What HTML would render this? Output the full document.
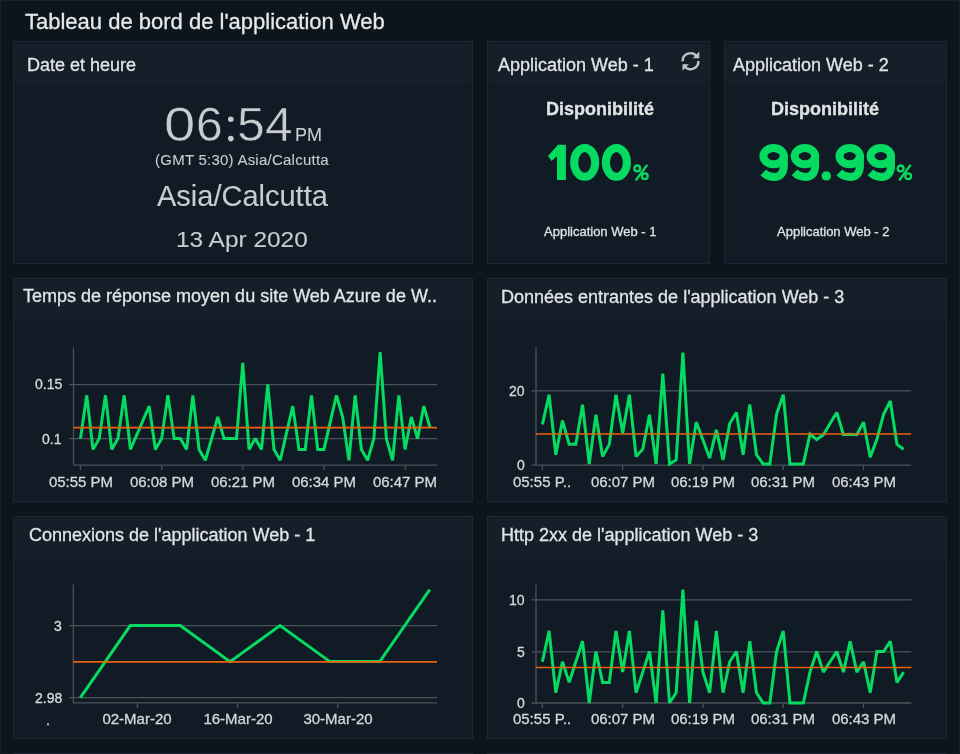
<!DOCTYPE html>
<html><head><meta charset="utf-8"><title>Tableau de bord</title>
<style>
html,body{margin:0;padding:0;}
body{width:960px;height:754px;overflow:hidden;background:#0b151b;position:relative;font-family:"Liberation Sans",sans-serif;}
.t{position:absolute;white-space:nowrap;will-change:transform;-webkit-text-stroke:0.3px currentColor;}
.card{position:absolute;background:#111b25;border:1px solid #1b2834;}
.head{background:#141f29;margin:1px 1px 0 1px;}
</style></head><body>
<div style="position:absolute;left:0;top:0;width:960px;height:1px;background:#18222b"></div>
<div style="position:absolute;left:0;top:0;width:1px;height:754px;background:#18222b"></div>
<div style="position:absolute;left:959px;top:0;width:1px;height:754px;background:#18222b"></div>
<div style="position:absolute;left:0;top:753px;width:960px;height:1px;background:#121c24"></div>
<div class="t" style="left:24.5px;top:10.88px;font-size:22px;line-height:22px;color:#e6e8ea;font-weight:normal;letter-spacing:0px;">Tableau de bord de l'application Web</div>
<div class="card" style="left:13px;top:41px;width:458px;height:221px"><div class="head" style="height:41px"></div></div>
<div class="card" style="left:487px;top:41px;width:221px;height:221px"><div class="head" style="height:41px"></div></div>
<div class="card" style="left:724px;top:41px;width:221px;height:221px"><div class="head" style="height:41px"></div></div>
<div class="card" style="left:13px;top:278px;width:458px;height:222px"><div class="head" style="height:41px"></div></div>
<div class="card" style="left:487px;top:278px;width:458px;height:222px"><div class="head" style="height:41px"></div></div>
<div class="card" style="left:13px;top:516px;width:458px;height:221px"><div class="head" style="height:42px"></div></div>
<div class="card" style="left:487px;top:516px;width:458px;height:221px"><div class="head" style="height:42px"></div></div>
<div style="position:absolute;left:13px;top:753px;width:460px;height:1px;background:#1c2731"></div>
<div style="position:absolute;left:487px;top:753px;width:460px;height:1px;background:#1c2731"></div>
<div class="t" style="left:26.7px;top:55.76px;font-size:18px;line-height:18px;color:#e2e4e6;font-weight:normal;letter-spacing:0px;">Date et heure</div>
<div class="t" style="left:498.4px;top:55.76px;font-size:18px;line-height:18px;color:#e2e4e6;font-weight:normal;letter-spacing:0px;">Application Web - 1</div>
<div class="t" style="left:733.4px;top:55.76px;font-size:18px;line-height:18px;color:#e2e4e6;font-weight:normal;letter-spacing:0px;">Application Web - 2</div>
<div class="t" style="left:22.6px;top:287.46px;font-size:18px;line-height:18px;color:#e2e4e6;font-weight:normal;letter-spacing:0px;">Temps de réponse moyen du site Web Azure de W..</div>
<div class="t" style="left:500.5px;top:287.66px;font-size:18px;line-height:18px;color:#e2e4e6;font-weight:normal;letter-spacing:0px;">Données entrantes de l'application Web - 3</div>
<div class="t" style="left:28.5px;top:526.26px;font-size:18px;line-height:18px;color:#e2e4e6;font-weight:normal;letter-spacing:0px;">Connexions de l'application Web - 1</div>
<div class="t" style="left:500.8px;top:526.26px;font-size:18px;line-height:18px;color:#e2e4e6;font-weight:normal;letter-spacing:0px;">Http 2xx de l'application Web - 3</div>
<svg style="position:absolute;left:0;top:0" width="960" height="754"><g fill="none" stroke="#bfc3c7" stroke-width="2.4"><path d="M682.6,61.4 A7.9,7.9 0 0 1 696.6,56.1"/><path d="M698.4,61 A7.9,7.9 0 0 1 684.4,66.3"/></g><path d="M699.3,51.6 L699.3,58.3 L692.6,58.3 Z" fill="#bfc3c7"/><path d="M682.5,70.7 L682.5,64.3 L688.9,64.3 Z" fill="#bfc3c7"/></svg>
<div class="t" style="left:164.4px;top:100.87px;font-size:48px;line-height:48px;color:#c8ccd0;transform:scaleX(1.17);transform-origin:0 0;-webkit-text-stroke:0.55px #111b25">0</div>
<div class="t" style="left:196px;top:100.87px;font-size:48px;line-height:48px;color:#c8ccd0;transform:scaleX(1.0);transform-origin:0 0;-webkit-text-stroke:0.55px #111b25">6</div>
<svg style="position:absolute;left:0;top:0" width="960" height="754"><circle cx="230.8" cy="119.2" r="2.8" fill="#c8ccd0"/><circle cx="230.8" cy="138.6" r="2.8" fill="#c8ccd0"/></svg>
<div class="t" style="left:236.7px;top:100.87px;font-size:48px;line-height:48px;color:#c8ccd0;transform:scaleX(1.04);transform-origin:0 0;-webkit-text-stroke:0.55px #111b25">5</div>
<div class="t" style="left:265.2px;top:100.87px;font-size:48px;line-height:48px;color:#c8ccd0;transform:scaleX(1.03);transform-origin:0 0;-webkit-text-stroke:0.55px #111b25">4</div>
<div class="t" style="left:294.5px;top:126.26px;font-size:18px;line-height:18px;color:#c8ccd0;font-weight:normal;letter-spacing:0px;-webkit-text-stroke:0.1px currentColor;">PM</div>
<div class="t" style="left:155px;top:152.1px;font-size:15px;line-height:15px;color:#c8ccd0;font-weight:normal;letter-spacing:0.24px;-webkit-text-stroke:0.1px currentColor;">(GMT 5:30) Asia/Calcutta</div>
<div class="t" style="left:156.9px;top:182.15px;font-size:29px;line-height:29px;color:#c8ccd0;font-weight:normal;letter-spacing:0px;-webkit-text-stroke:0.1px currentColor;">Asia/Calcutta</div>
<div class="t" style="left:176.3px;top:229.28px;font-size:22px;line-height:22px;color:#c8ccd0;font-weight:normal;letter-spacing:0px;-webkit-text-stroke:0.1px currentColor;transform:scaleX(1.11);transform-origin:0 0;">13 Apr 2020</div>
<div class="t" style="left:546px;top:99.51px;font-size:18px;line-height:18px;color:#e0e2e4;font-weight:bold;letter-spacing:0px;">Disponibilité</div>
<div class="t" style="left:770.9px;top:99.51px;font-size:18px;line-height:18px;color:#e0e2e4;font-weight:bold;letter-spacing:0px;">Disponibilité</div>
<svg style="position:absolute;left:0;top:0" width="960" height="754" viewBox="0 0 960 754"><path d="M558,144.8 L565.9,144.8 L565.9,180.1 L557,180.1 L557,156.3 L551.6,160.9 L548,155.9 Z" fill="#05db61"/><ellipse cx="584.7" cy="162.4" rx="10.5" ry="14.35" fill="none" stroke="#05db61" stroke-width="8.1"/><ellipse cx="616.4" cy="162.4" rx="10.5" ry="14.35" fill="none" stroke="#05db61" stroke-width="8.1"/><ellipse cx="773.6" cy="156.1" rx="10.2" ry="8.1" fill="none" stroke="#05db61" stroke-width="8"/><path d="M783.8,155 L783.8,166 C783.8,173.5 779.5,176.9 774.5,176.9 C769.5,176.9 766.2,175.4 763.3,172.4" fill="none" stroke="#05db61" stroke-width="8"/><ellipse cx="804.9" cy="156.1" rx="10.2" ry="8.1" fill="none" stroke="#05db61" stroke-width="8"/><path d="M815.1,155 L815.1,166 C815.1,173.5 810.8,176.9 805.8,176.9 C800.8,176.9 797.5,175.4 794.6,172.4" fill="none" stroke="#05db61" stroke-width="8"/><ellipse cx="849.7" cy="156.1" rx="10.2" ry="8.1" fill="none" stroke="#05db61" stroke-width="8"/><path d="M859.9,155 L859.9,166 C859.9,173.5 855.6,176.9 850.6,176.9 C845.6,176.9 842.3,175.4 839.4,172.4" fill="none" stroke="#05db61" stroke-width="8"/><ellipse cx="880.8" cy="156.1" rx="10.2" ry="8.1" fill="none" stroke="#05db61" stroke-width="8"/><path d="M891,155 L891,166 C891,173.5 886.7,176.9 881.7,176.9 C876.7,176.9 873.4,175.4 870.5,172.4" fill="none" stroke="#05db61" stroke-width="8"/><circle cx="826.3" cy="175.9" r="4.7" fill="#05db61"/><g transform="translate(632.6,164.1)"><g fill="none" stroke="#05db61" stroke-width="2.3"><circle cx="4.6" cy="4.3" r="2.9"/><circle cx="12.2" cy="12.1" r="2.9"/></g><path d="M3.2 16.3 L14.6 0.8" stroke="#05db61" stroke-width="2.4"/></g><g transform="translate(896,164.1)"><g fill="none" stroke="#05db61" stroke-width="2.3"><circle cx="4.6" cy="4.3" r="2.9"/><circle cx="12.2" cy="12.1" r="2.9"/></g><path d="M3.2 16.3 L14.6 0.8" stroke="#05db61" stroke-width="2.4"/></g></svg>
<div class="t" style="left:544.4px;top:224.6px;font-size:13px;line-height:13px;color:#e0e2e4;font-weight:normal;letter-spacing:0px;">Application Web - 1</div>
<div class="t" style="left:776.5px;top:224.6px;font-size:13px;line-height:13px;color:#e0e2e4;font-weight:normal;letter-spacing:0px;">Application Web - 2</div>
<div class="t" style="right:898.2px;top:377.45px;font-size:14px;line-height:14px;color:#d6d8da;text-align:right">0.15</div>
<div class="t" style="right:898.2px;top:431.55px;font-size:14px;line-height:14px;color:#d6d8da;text-align:right">0.1</div>
<div class="t" style="left:-19.5px;width:200px;top:474.2px;font-size:15px;line-height:15px;color:#d6d8da;text-align:center">05:55 PM</div>
<div class="t" style="left:61.7px;width:200px;top:474.2px;font-size:15px;line-height:15px;color:#d6d8da;text-align:center">06:08 PM</div>
<div class="t" style="left:142.9px;width:200px;top:474.2px;font-size:15px;line-height:15px;color:#d6d8da;text-align:center">06:21 PM</div>
<div class="t" style="left:224.1px;width:200px;top:474.2px;font-size:15px;line-height:15px;color:#d6d8da;text-align:center">06:34 PM</div>
<div class="t" style="left:305.3px;width:200px;top:474.2px;font-size:15px;line-height:15px;color:#d6d8da;text-align:center">06:47 PM</div>
<div class="t" style="right:435.5px;top:384.15px;font-size:14px;line-height:14px;color:#d6d8da;text-align:right">20</div>
<div class="t" style="right:435.5px;top:458.15px;font-size:14px;line-height:14px;color:#d6d8da;text-align:right">0</div>
<div class="t" style="left:442.4px;width:200px;top:474.2px;font-size:15px;line-height:15px;color:#d6d8da;text-align:center">05:55 P..</div>
<div class="t" style="left:522.68px;width:200px;top:474.2px;font-size:15px;line-height:15px;color:#d6d8da;text-align:center">06:07 PM</div>
<div class="t" style="left:602.96px;width:200px;top:474.2px;font-size:15px;line-height:15px;color:#d6d8da;text-align:center">06:19 PM</div>
<div class="t" style="left:683.24px;width:200px;top:474.2px;font-size:15px;line-height:15px;color:#d6d8da;text-align:center">06:31 PM</div>
<div class="t" style="left:763.52px;width:200px;top:474.2px;font-size:15px;line-height:15px;color:#d6d8da;text-align:center">06:43 PM</div>
<div class="t" style="right:898px;top:618.65px;font-size:14px;line-height:14px;color:#d6d8da;text-align:right">3</div>
<div class="t" style="right:898px;top:690.85px;font-size:14px;line-height:14px;color:#d6d8da;text-align:right">2.98</div>
<div class="t" style="left:46.3px;top:712.65px;font-size:14px;line-height:14px;color:#d6d8da;font-weight:normal;letter-spacing:0px;">.</div>
<div class="t" style="left:37.4px;width:200px;top:710.9px;font-size:15px;line-height:15px;color:#d6d8da;text-align:center">02-Mar-20</div>
<div class="t" style="left:137.55px;width:200px;top:710.9px;font-size:15px;line-height:15px;color:#d6d8da;text-align:center">16-Mar-20</div>
<div class="t" style="left:237.7px;width:200px;top:710.9px;font-size:15px;line-height:15px;color:#d6d8da;text-align:center">30-Mar-20</div>
<div class="t" style="right:435.5px;top:593.35px;font-size:14px;line-height:14px;color:#d6d8da;text-align:right">10</div>
<div class="t" style="right:435.5px;top:645.05px;font-size:14px;line-height:14px;color:#d6d8da;text-align:right">5</div>
<div class="t" style="right:435.5px;top:696.15px;font-size:14px;line-height:14px;color:#d6d8da;text-align:right">0</div>
<div class="t" style="left:442.4px;width:200px;top:710.9px;font-size:15px;line-height:15px;color:#d6d8da;text-align:center">05:55 P..</div>
<div class="t" style="left:522.68px;width:200px;top:710.9px;font-size:15px;line-height:15px;color:#d6d8da;text-align:center">06:07 PM</div>
<div class="t" style="left:602.96px;width:200px;top:710.9px;font-size:15px;line-height:15px;color:#d6d8da;text-align:center">06:19 PM</div>
<div class="t" style="left:683.24px;width:200px;top:710.9px;font-size:15px;line-height:15px;color:#d6d8da;text-align:center">06:31 PM</div>
<div class="t" style="left:763.52px;width:200px;top:710.9px;font-size:15px;line-height:15px;color:#d6d8da;text-align:center">06:43 PM</div>
<svg style="position:absolute;left:0;top:0" width="960" height="754" viewBox="0 0 960 754"><line x1="73.5" y1="347.4" x2="73.5" y2="465.2" stroke="#4b535a" stroke-width="1.3"/><line x1="73.5" y1="465.2" x2="437" y2="465.2" stroke="#4b535a" stroke-width="1.3"/><line x1="69.2" y1="384.6" x2="437" y2="384.6" stroke="#4b535a" stroke-width="1.3"/><line x1="69.2" y1="438.6" x2="437" y2="438.6" stroke="#4b535a" stroke-width="1.3"/><line x1="80.5" y1="465.2" x2="80.5" y2="470" stroke="#4b535a" stroke-width="1.3"/><line x1="161.7" y1="465.2" x2="161.7" y2="470" stroke="#4b535a" stroke-width="1.3"/><line x1="242.9" y1="465.2" x2="242.9" y2="470" stroke="#4b535a" stroke-width="1.3"/><line x1="324.1" y1="465.2" x2="324.1" y2="470" stroke="#4b535a" stroke-width="1.3"/><line x1="405.3" y1="465.2" x2="405.3" y2="470" stroke="#4b535a" stroke-width="1.3"/><polyline points="80.5,438.6 86.74,395.32 92.98,449.42 99.23,438.6 105.47,395.32 111.71,449.42 117.95,438.6 124.19,395.32 130.44,449.42 136.68,435.03 142.92,420.53 149.16,406.14 155.4,449.42 161.65,438.6 167.89,395.32 174.13,438.6 180.37,438.6 186.61,449.42 192.86,395.32 199.1,449.42 205.34,460.24 211.58,438.6 217.82,416.96 224.07,438.6 230.31,438.6 236.55,438.6 242.79,362.86 249.03,449.42 255.28,438.6 261.52,449.42 267.76,384.5 274,449.42 280.24,460.24 286.49,433.19 292.73,406.14 298.97,449.42 305.21,449.42 311.45,395.32 317.7,449.42 323.94,449.42 330.18,422.37 336.42,395.32 342.66,416.96 348.91,460.24 355.15,395.32 361.39,449.42 367.63,460.24 373.87,438.6 380.12,352.04 386.36,438.6 392.6,460.24 398.84,395.32 405.08,449.42 411.33,416.96 417.57,438.6 423.81,406.14 430.05,427.78" fill="none" stroke="#05db61" stroke-width="3" stroke-linejoin="miter" stroke-miterlimit="2"/><line x1="73.5" y1="427.6" x2="437" y2="427.6" stroke="#eb620e" stroke-width="1.7"/><line x1="536" y1="347" x2="536" y2="465.1" stroke="#4b535a" stroke-width="1.3"/><line x1="531.5" y1="465.1" x2="911.2" y2="465.1" stroke="#4b535a" stroke-width="1.3"/><line x1="531.5" y1="390.9" x2="911.2" y2="390.9" stroke="#4b535a" stroke-width="1.3"/><line x1="542.4" y1="465.1" x2="542.4" y2="470" stroke="#4b535a" stroke-width="1.3"/><line x1="622.68" y1="465.1" x2="622.68" y2="470" stroke="#4b535a" stroke-width="1.3"/><line x1="702.96" y1="465.1" x2="702.96" y2="470" stroke="#4b535a" stroke-width="1.3"/><line x1="783.24" y1="465.1" x2="783.24" y2="470" stroke="#4b535a" stroke-width="1.3"/><line x1="863.52" y1="465.1" x2="863.52" y2="470" stroke="#4b535a" stroke-width="1.3"/><polyline points="542.4,424.35 549.09,394.71 555.78,454.73 562.47,420.64 569.16,444.35 575.85,444.35 582.54,404.71 589.23,463.99 595.92,414.71 602.61,456.58 609.3,444.35 615.99,394.71 622.68,432.87 629.37,394.71 636.06,456.58 642.75,449.17 649.44,414.71 656.13,463.99 662.82,373.59 669.51,463.99 676.2,459.91 682.89,352.47 689.58,463.99 696.27,422.12 702.96,440.09 709.65,458.06 716.34,429.9 723.03,459.91 729.72,423.6 736.41,412.49 743.1,454.73 749.79,404.34 756.48,454.73 763.17,463.99 769.86,463.99 776.55,414.34 783.24,394.71 789.93,463.99 796.62,463.99 803.31,463.99 810,433.98 816.69,439.54 823.38,434.72 830.07,423.6 836.76,412.49 843.45,434.72 850.14,434.35 856.83,434.72 863.52,422.12 870.21,457.32 876.9,439.17 883.59,414.34 890.28,401 896.97,444.35 903.66,449.17" fill="none" stroke="#05db61" stroke-width="3" stroke-linejoin="miter" stroke-miterlimit="2"/><line x1="536" y1="434" x2="911.2" y2="434" stroke="#eb620e" stroke-width="1.7"/><line x1="73.3" y1="584.4" x2="73.3" y2="702.9" stroke="#4b535a" stroke-width="1.3"/><line x1="73.3" y1="702.9" x2="437" y2="702.9" stroke="#4b535a" stroke-width="1.3"/><line x1="69.2" y1="625.6" x2="437" y2="625.6" stroke="#4b535a" stroke-width="1.3"/><line x1="69.2" y1="697.6" x2="437" y2="697.6" stroke="#4b535a" stroke-width="1.3"/><line x1="137.4" y1="702.9" x2="137.4" y2="708" stroke="#4b535a" stroke-width="1.3"/><line x1="237.55" y1="702.9" x2="237.55" y2="708" stroke="#4b535a" stroke-width="1.3"/><line x1="337.7" y1="702.9" x2="337.7" y2="708" stroke="#4b535a" stroke-width="1.3"/><polyline points="80.4,697.6 130.3,625.6 180.2,625.6 230.1,661.6 280,625.6 329.9,661.6 379.8,661.6 429.7,589.6" fill="none" stroke="#05db61" stroke-width="3" stroke-linejoin="miter" stroke-miterlimit="2"/><line x1="73.3" y1="661.8" x2="437" y2="661.8" stroke="#eb620e" stroke-width="1.7"/><line x1="536" y1="584.7" x2="536" y2="703" stroke="#4b535a" stroke-width="1.3"/><line x1="531.5" y1="703" x2="911.4" y2="703" stroke="#4b535a" stroke-width="1.3"/><line x1="531.5" y1="599.9" x2="911.4" y2="599.9" stroke="#4b535a" stroke-width="1.3"/><line x1="531.5" y1="651.8" x2="911.4" y2="651.8" stroke="#4b535a" stroke-width="1.3"/><line x1="542.4" y1="703" x2="542.4" y2="708" stroke="#4b535a" stroke-width="1.3"/><line x1="622.68" y1="703" x2="622.68" y2="708" stroke="#4b535a" stroke-width="1.3"/><line x1="702.96" y1="703" x2="702.96" y2="708" stroke="#4b535a" stroke-width="1.3"/><line x1="783.24" y1="703" x2="783.24" y2="708" stroke="#4b535a" stroke-width="1.3"/><line x1="863.52" y1="703" x2="863.52" y2="708" stroke="#4b535a" stroke-width="1.3"/><polyline points="542.4,661.8 549.09,630.9 555.78,692.7 562.47,661.8 569.16,682.4 575.85,661.8 582.54,641.2 589.23,703 595.92,651.5 602.61,682.4 609.3,682.4 615.99,630.9 622.68,672.1 629.37,630.9 636.06,692.7 642.75,672.1 649.44,651.5 656.13,703 662.82,610.3 669.51,703 676.2,692.7 682.89,589.7 689.58,703 696.27,620.6 702.96,672.1 709.65,692.7 716.34,630.9 723.03,692.7 729.72,661.8 736.41,651.5 743.1,692.7 749.79,641.2 756.48,692.7 763.17,703 769.86,703 776.55,651.5 783.24,630.9 789.93,703 796.62,703 803.31,703 810,672.1 816.69,651.5 823.38,672.1 830.07,661.8 836.76,651.5 843.45,672.1 850.14,641.2 856.83,672.1 863.52,661.8 870.21,692.7 876.9,651.5 883.59,651.5 890.28,641.2 896.97,682.4 903.66,672.1" fill="none" stroke="#05db61" stroke-width="3" stroke-linejoin="miter" stroke-miterlimit="2"/><line x1="536" y1="667.5" x2="911.4" y2="667.5" stroke="#eb620e" stroke-width="1.7"/></svg>
</body></html>
